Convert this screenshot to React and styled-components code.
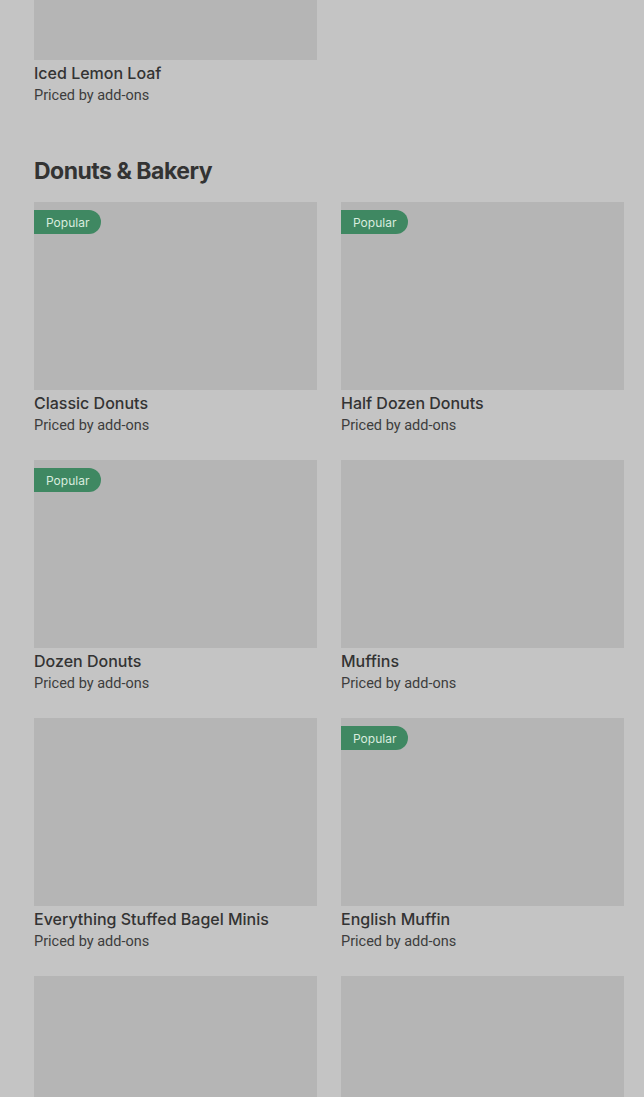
import React from "react";
import styled, { createGlobalStyle } from "styled-components";

const Global = createGlobalStyle`
  html, body { margin: 0; padding: 0; overflow: hidden; background: #c4c4c4; }
  body { font-family: Inter, "Noto Sans", Arial, sans-serif; color: #333; }
`;

const Page = styled.div`
  padding: 0 20px 0 34px;
  background: #c4c4c4;
  height: 1097px;
  overflow: hidden;
`;

const Section = styled.section`
  display: flex;
  flex-direction: column;
`;

const Heading = styled.h2`
  margin: 0;
  font-size: 23px;
  font-weight: 700;
  letter-spacing: -0.5px;
  line-height: 32px;
  color: #333;
  padding: 0 0 15px;
`;

const Grid = styled.div`
  display: grid;
  grid-template-columns: 283px 283px;
  column-gap: 24px;
  row-gap: 24px;
  margin-bottom: ${(p) => p.$mb || 0}px;
`;

const Card = styled.div`
  display: flex;
  flex-direction: column;
`;

const Thumb = styled.div`
  position: relative;
  height: ${(p) => p.$h || 188}px;
  background: #b5b5b5;
`;

const Badge = styled.span`
  position: absolute;
  top: 8px;
  left: 0;
  height: 24px;
  padding: 0 12px;
  display: flex;
  align-items: center;
  background: #3f8862;
  color: #d9ecdf;
  font-size: 12px;
  border-radius: 0 12px 12px 0;
`;

const Title = styled.div`
  margin-top: 2px;
  font-size: 16px;
  font-weight: 500;
  line-height: 22px;
  color: #333;
`;

const Sub = styled.div`
  padding-top: 2px;
  font-family: Roboto, Inter, sans-serif;
  font-size: 14.5px;
  line-height: 20px;
  color: #3d3d3d;
`;

const Item = ({ name, popular, h }) => (
  <Card>
    <Thumb $h={h}>{popular && <Badge>Popular</Badge>}</Thumb>
    {name && (
      <>
        <Title>{name}</Title>
        <Sub>Priced by add-ons</Sub>
      </>
    )}
  </Card>
);

export default function App() {
  const items = [
    { name: "Classic Donuts", popular: true },
    { name: "Half Dozen Donuts", popular: true },
    { name: "Dozen Donuts", popular: true },
    { name: "Muffins" },
    { name: "Everything Stuffed Bagel Minis" },
    { name: "English Muffin", popular: true },
    { name: "" },
    { name: "" },
  ];
  return (
    <>
      <Global />
      <Page>
        <Grid $mb={49}>
          <Item name="Iced Lemon Loaf" h={60} />
        </Grid>
        <Section>
          <Heading>Donuts &amp; Bakery</Heading>
          <Grid>
            {items.map((it, i) => (
              <Item key={i} {...it} />
            ))}
          </Grid>
        </Section>
      </Page>
    </>
  );
}
